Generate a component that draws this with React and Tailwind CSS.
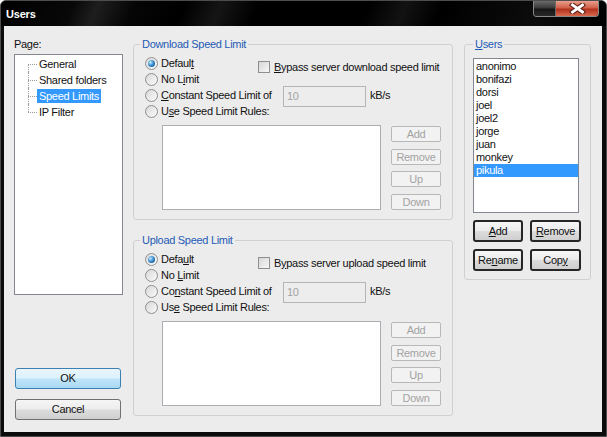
import React from "react";

const users = ["anonimo", "bonifazi", "dorsi", "joel", "joel2", "jorge", "juan", "monkey", "pikula"];
const pages = ["General", "Shared folders", "Speed Limits", "IP Filter"];

const Radio = ({ checked, children }) => (
  <div className="flex h-[16px] items-center">
    <span className="flex h-[13px] w-[13px] shrink-0 items-center justify-center rounded-full border border-[#8f8f8f] bg-[linear-gradient(135deg,#d8d8d8,#fbfbfb)]">
      {checked && (
        <span className="h-[7px] w-[7px] rounded-full bg-[radial-gradient(circle_at_35%_35%,#bfe9ff,#2b7fc4_55%,#0d4a82)]" />
      )}
    </span>
    <span className="ml-[3px] whitespace-nowrap">{children}</span>
  </div>
);

const Check = ({ children }) => (
  <div className="mt-[4px] flex h-[16px] items-center">
    <span className="h-[12px] w-[12px] shrink-0 border border-[#8f8f8f] bg-[linear-gradient(135deg,#d6d6d6,#f8f8f8)]" />
    <span className="ml-[4px] whitespace-nowrap">{children}</span>
  </div>
);

const SmallButton = ({ children }) => (
  <div className="flex h-[16px] w-[50px] items-center justify-center rounded-[2px] border border-[#b8b8b8] bg-[#f2f2f2] leading-[14px] text-[#a3a3a3]">
    {children}
  </div>
);

// grey push button; "dark" ones carry the heavy frame of the user list buttons
const Button = ({ children, dark, className = "" }) => (
  <div
    className={`flex items-center justify-center rounded-[3px] bg-[linear-gradient(#f6f6f6,#ececec_48%,#dcdcdc_52%,#cfcfcf)] ${
      dark ? "border-2 border-[#262626]" : "border border-[#707070]"
    } ${className}`}
  >
    {children}
  </div>
);

function SpeedGroup({ title, labels, bypass, className = "" }) {
  return (
    <fieldset className={`rounded-[3px] border border-[#d0d0d0] pb-[9px] pl-[11px] pr-[8px] pt-[4px] ${className}`}>
      <legend className="ml-[-5px] px-[2px] leading-[14px] text-[#1f5bb5]">{title}</legend>
      <div className="flex">
        <div className="flex w-[113px] flex-col">
          <Radio checked>{labels[0]}</Radio>
          <Radio>{labels[1]}</Radio>
        </div>
        <Check>{bypass}</Check>
      </div>
      <div className="flex h-[16px] items-start">
        <div className="w-[138px]">
          <Radio>{labels[2]}</Radio>
        </div>
        <div className="mt-[-1px] flex h-[21px] w-[83px] items-center border border-[#b5b5b5] bg-[#ededed] pl-[3px] text-[#a3a3a3]">
          10
        </div>
        <span className="ml-[4px] leading-[16px]">kB/s</span>
      </div>
      <Radio>{labels[3]}</Radio>
      <div className="mt-[6px] flex">
        <div className="ml-[17px] h-[85px] w-[219px] border border-[#abadb3] bg-white" />
        <div className="ml-[10px] mt-[1px] flex flex-col gap-[6.5px]">
          {["Add", "Remove", "Up", "Down"].map((b) => (
            <SmallButton key={b}>{b}</SmallButton>
          ))}
        </div>
      </div>
    </fieldset>
  );
}

export default function App() {
  return (
    <div className="flex h-[437px] w-[607px] flex-col overflow-hidden rounded-t-[6px] border border-[#4d4d4d] bg-[#0b0b0b] font-['Liberation_Sans',Arial,sans-serif] text-[11px] tracking-[-0.3px] text-[#111]">
      {/* caption */}
      <div className="flex h-[25px] shrink-0 items-start bg-[linear-gradient(112deg,#000_0%,#080808_12%,#1e1e1e_16%,#050505_22%,#000_30%,#151515_36%,#000_42%,#000_60%,#121212_66%,#000_72%,#0c0c0c_88%,#000_100%)]">
        <span className="ml-[5px] mt-[6px] text-[11px] font-bold leading-[14px] tracking-[-0.2px] text-white">Users</span>
        <div className="ml-auto mr-[7px] flex h-[16px] overflow-hidden rounded-b-[4px] border border-t-0 border-[#8a8a8a]">
          <div className="w-[22px] border-r border-[#6a6a6a] bg-[linear-gradient(#6a6a6a,#3a3a3a_45%,#161616_55%,#2a2a2a)]" />
          <div className="flex w-[42px] items-center justify-center bg-[linear-gradient(#e9a08c,#d2604a_45%,#b3321f_55%,#d86a4e)]">
            <svg width="17" height="11" viewBox="0 0 17 11">
              <path d="M3.5 2 L13.5 9 M13.5 2 L3.5 9" stroke="#5b2015" strokeWidth="5" strokeLinecap="square" fill="none" />
              <path d="M3.5 2 L13.5 9 M13.5 2 L3.5 9" stroke="#fff" strokeWidth="2.8" strokeLinecap="square" fill="none" />
            </svg>
          </div>
        </div>
      </div>

      {/* dialog body */}
      <div className="ml-[3px] flex h-[406px] w-[598px] bg-[#ececec] pl-[10px] pt-[11px]">
        {/* page tree + ok/cancel */}
        <div className="flex w-[109px] flex-col">
          <span className="leading-[14px]">Page:</span>
          <div className="mt-[3px] h-[241px] border border-[#828790] bg-white pt-[1px]">
            {pages.map((p, i) => (
              <div key={p} className="flex h-[16px] items-stretch">
                <div className="w-[13px]" />
                <div className="flex w-[9px] flex-col">
                  <div className={`h-[8px] ${i > 0 ? "border-l border-dotted border-[#9a9a9a]" : ""}`} />
                  <div
                    className={`h-[8px] border-t border-dotted border-[#9a9a9a] ${
                      i < pages.length - 1 ? "border-l" : ""
                    }`}
                  />
                </div>
                <span
                  className={`my-[1px] flex items-center px-[2px] leading-[14px] ${
                    p === "Speed Limits" ? "bg-[#3399ff] text-white" : ""
                  }`}
                >
                  {p}
                </span>
              </div>
            ))}
          </div>
          <div className="ml-[1px] mt-[73px] flex h-[21px] w-[106px] items-center justify-center rounded-[3px] border border-[#3c7fb1] bg-[linear-gradient(#eaf6fd,#dcf1fc_48%,#c1e5f8_52%,#a9d9f4)]">
            OK
          </div>
          <Button className="ml-[1px] mt-[10px] h-[21px] w-[106px]">Cancel</Button>
        </div>

        {/* speed limit groups */}
        <div className="ml-[10px] flex w-[320px] flex-col">
          <SpeedGroup
            title="Download Speed Limit"
            labels={[
              <>Defaul<u>t</u></>,
              <>No L<u>i</u>mit</>,
              <><u>C</u>onstant Speed Limit of</>,
              <>U<u>s</u>e Speed Limit Rules:</>,
            ]}
            bypass={<><u>B</u>ypass server download speed limit</>}
          />
          <SpeedGroup
            className="mt-[13px]"
            title="Upload Speed Limit"
            labels={[
              <>Defa<u>u</u>lt</>,
              <>No <u>L</u>imit</>,
              <>Co<u>n</u>stant Speed Limit of</>,
              <>Us<u>e</u> Speed Limit Rules:</>,
            ]}
            bypass={<>B<u>y</u>pass server upload speed limit</>}
          />
        </div>

        {/* user list */}
        <div className="ml-[11px] w-[127px]">
          <fieldset className="rounded-[3px] border border-[#d0d0d0] pb-[8px] pl-[8px] pr-[8px] pt-[7px]">
            <legend className="px-[2px] leading-[14px] text-[#1f5bb5]">
              <u>U</u>sers
            </legend>
            <div className="h-[155px] w-[106px] border border-[#828790] bg-white pt-[1px]">
              {users.map((u) => (
                <div
                  key={u}
                  className={`h-[13px] pl-[2px] leading-[13px] ${u === "pikula" ? "bg-[#3399ff] text-white" : ""}`}
                >
                  {u}
                </div>
              ))}
            </div>
            <div className="mt-[7px] flex gap-[7px]">
              <Button dark className="h-[22px] w-[50px]">
                <u>A</u>dd
              </Button>
              <Button dark className="h-[22px] w-[51px]">
                <u>R</u>emove
              </Button>
            </div>
            <div className="mt-[7px] flex gap-[7px]">
              <Button dark className="h-[22px] w-[50px]">
                Re<u>n</u>ame
              </Button>
              <Button dark className="h-[22px] w-[51px]">
                Cop<u>y</u>
              </Button>
            </div>
          </fieldset>
        </div>
      </div>
    </div>
  );
}
